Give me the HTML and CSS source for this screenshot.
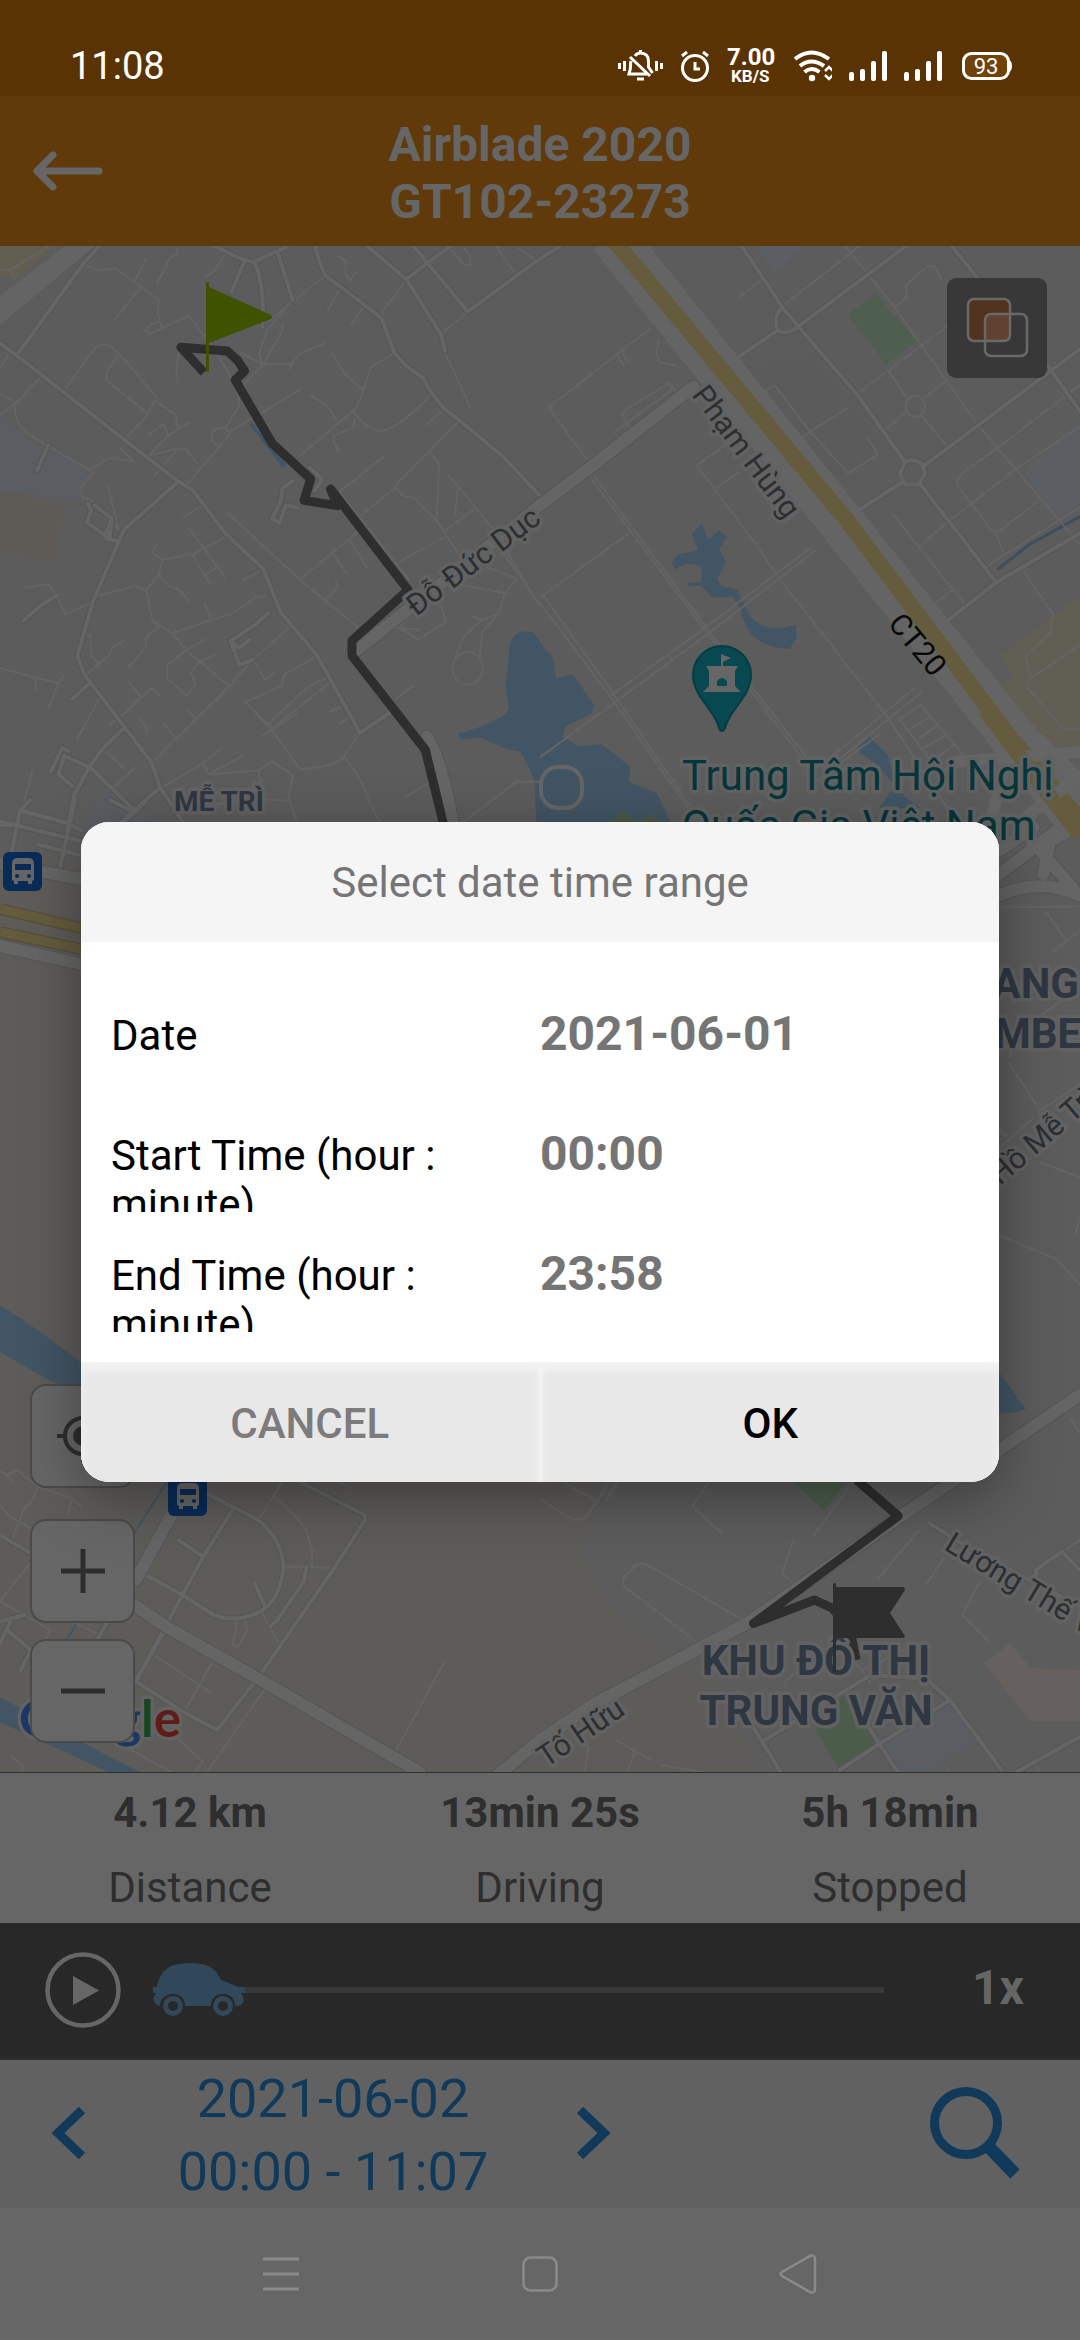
FILE: index.html
```html
<!DOCTYPE html>
<html lang="en">
<head>
<meta charset="utf-8">
<meta name="viewport" content="width=device-width, initial-scale=1">
<title>Trip history</title>
<link rel="stylesheet" href="styles.css">
</head>
<body>
<div class="app">
  <div class="status">
    <span class="clock">11:08</span>
    <div class="status-icons">
      <svg width="45" height="32" viewBox="0 0 45 32" fill="none" stroke="#fff" stroke-width="3"><path d="M1.500 13v6M6.500 11v10M38.500 11v10M43.500 13v6M12 7l20 19M17 6c2-3 4-3 5.500-3 5 0 8 3 8 8v6l4 6M22.500 0v4M13 11c-1 3 0 7-1 9l-1 4h18M19 29h7"/></svg>
      <svg width="30" height="32" viewBox="0 0 30 32" fill="none" stroke="#fff" stroke-width="3"><circle cx="15" cy="18" r="12.500"/><path d="M15 12v7h5M2 6l5-4M28 6l-5-4"/></svg>
      <span class="speed"><b>7.00</b><b class="unit">KB/S</b></span>
      <svg width="38" height="32" viewBox="0 0 38 32" fill="none" stroke="#fff" stroke-width="4"><path d="M1 9q16-13 34 0M6 16q11-9 24 0M10.500 22q7-6 15 0"/><circle cx="18" cy="28" r="3.200" fill="#fff" stroke="none"/><path d="M31 21l4-4 4 4M31 25l4 4 4-4" stroke-width="2.500"/></svg>
      <svg width="38" height="32" viewBox="0 0 38 32" fill="#fff"><rect y="22" width="5" height="9" rx="2"/><rect x="11" y="19" width="5" height="12" rx="2"/><rect x="22" y="11" width="5" height="20" rx="2"/><rect x="33" y="1" width="5" height="30" rx="2"/></svg>
      <svg width="38" height="32" viewBox="0 0 38 32" fill="#fff"><rect y="22" width="5" height="9" rx="2"/><rect x="11" y="19" width="5" height="12" rx="2"/><rect x="22" y="11" width="5" height="20" rx="2"/><rect x="33" y="1" width="5" height="30" rx="2"/></svg>
      <svg width="53" height="32" viewBox="0 0 53 32"><rect x="4.500" y="3.500" width="45" height="25" rx="8" fill="#70430a" stroke="#fff" stroke-width="3"/><path d="M50 10q3 1 3 6t-3 6z" fill="#fff"/><text class="battery" x="27" y="24" text-anchor="middle">93</text></svg>
    </div>
  </div>

  <header class="header">
    <button class="back" aria-label="Back"><svg width="70" height="40" viewBox="0 0 70 40" fill="none" stroke="#666" stroke-width="7" stroke-linecap="round" stroke-linejoin="round"><path d="M66 20H4M20 4L4 20l16 16"/></svg></button>
    <h1>Airblade 2020<br>GT102-23273</h1>
  </header>

  <main class="map">
    <svg class="map-canvas" viewBox="0 246 1080 1526" preserveAspectRatio="xMidYMid slice" role="img" aria-label="Trip map">
      <rect x="0" y="246" width="1080" height="1526" fill="#5c5c5c"/>
      <!-- ground tints -->
      <path fill="#5e5c59" d="M0 850Q300 880 400 1100L600 1500 580 1560 620 1620 720 1690 760 1772H0z"/>
      <g transform="translate(0 240) scale(.34439 .37628)">
        <path fill="#5a5d61" d="M0 470L100 545 250 600 240 690 0 665z"/>
        <path fill="#5e5b57" d="M0 665L185 705 155 865 0 820z"/>
        <path fill="#625e50" d="M0 0H180L40 105 0 95z"/>
        <path fill="#5a5d61" d="M310 1455L560 1600H210z"/>
      </g>
      <g transform="translate(540 240) scale(.34439 .37628)">
        <path fill="#4f5f4f" d="M975 142L1092 270 1005 330 895 198z"/>
        <path fill="#5b5e63" d="M610 0H790L680 88zM1568 480V700L1500 740 1405 615z"/>
        <path fill="#615e53" d="M1568 945L1336 1105 1375 1165 1280 1230 1360 1330 1568 1350z"/>
        <path fill="#595b5e" d="M530 350L790 300 1000 550 900 620 780 640z" opacity=".3"/>
      </g>
      <g transform="translate(540 1300) scale(.34439 .33333)">
        <path fill="#4b5c4b" d="M735 545H890L825 633zM880 1185L978 1332 870 1410 800 1290z"/>
        <path fill="#66605e" d="M1365 1030L1425 1105 1568 1110V1265H1425L1290 1090z"/>
        <path fill="#5a5d62" d="M1190 1200L1285 1310 1120 1418H1040L985 1332z"/>
      </g>
      <!-- water -->
      <g fill="#425564">
        <g transform="translate(0 240) scale(.34439 .37628)">
          <path d="M730 485L835 600 820 605 725 490z"/>
          <path d="M1575 1075L1548 1042Q1490 1030 1480 1080L1468 1190 1478 1245Q1460 1280 1330 1312L1338 1328 1395 1322 1470 1352 1512 1360 1535 1400 1552 1440 1558 1568H1575z"/>
        </g>
        <g transform="translate(540 240) scale(.34439 .37628)">
          <path d="M0 1072L38 1110 46 1165 95 1155 157 1235 150 1260 75 1290 65 1320 110 1345 180 1340 262 1400 258 1440 340 1470 390 1568H0z"/>
          <path d="M440 780L470 756 488 795 520 772 542 788 520 822 540 855 515 900 525 920 572 928 610 1000Q660 1050 742 1022L747 1055 725 1087Q600 1080 585 985L560 948 500 950 468 918 430 920 430 912 468 908 470 870Q430 850 392 876L382 858 400 835 460 825z"/>
          <path d="M925 1345L958 1322 1010 1368 1030 1440 1060 1480 1105 1510H985L1030 1450 980 1395 928 1362z"/>
          <path fill="none" stroke="#3f4e5a" stroke-width="3" d="M1328 876L1420 810 1568 735"/>
        </g>
        <path d="M0 1305Q40 1330 84 1365V1400L0 1352zM0 1697L110 1757 140 1772H108L0 1722z"/>
        <path d="M999 1372L1026 1409 1018 1412 999 1414z"/>
        <path fill="none" stroke="#425564" stroke-width="2" d="M168 1480L135 1532 60 1650"/>
        <path fill="#4c5a46" d="M612 822l10-11 14 11zM640 822l12-8 8 8z"/>
      </g>
      <!-- lanes and alleys -->
      <g class="minor">
        <g transform="translate(0 240) scale(.34439 .37628)">
          <path d="M0 80H30L170 0M30 80L45 105M240 65L290 80 335 75 410 125 462 160 458 190 470 235 548 200 590 250M425 50L390 110M410 125L332 213M515 18V40L495 45 455 118M655 35L620 85 592 100M470 235L435 250 414 235M462 218L435 225 425 245"/>
          <path d="M190 395L265 300Q290 270 320 282L345 300 455 418 430 462 308 372 310 350 345 302M430 462L362 530M455 430L510 465 518 500M430 520L475 488 488 520 550 485M488 520L432 572 515 555 540 558 575 595M515 555L445 630M45 430Q35 480 80 515L260 612 315 580 387 588 345 550M275 612L232 660 240 685 265 692 345 770 312 650M0 410L48 432 120 362M0 465L48 432M0 340L25 305"/>
          <path d="M520 290L512 345 516 382M590 250L635 310 690 395 695 440 655 498 668 515 548 645 520 642M655 498Q600 500 620 540L645 548M665 510L740 470 875 395M700 300L760 330 845 330 875 300 945 274M840 345L850 330M760 330L753 300 775 240 830 180 850 155M765 330L820 240 820 220M695 395L765 330"/>
          <path d="M945 95L760 230M990 125L950 190M1058 175L1018 225M980 42L1005 55 1002 85 1015 110 1038 82M1180 105L1112 190 1108 208M1145 300L1075 340 1055 400 1035 445 870 575M965 302L1000 355 1055 400M900 412L950 440 978 480M1025 455Q1060 500 1105 508 1160 500 1250 412M1030 475L1025 498 970 520 968 535 985 562M1290 450L1235 492M1335 480L1145 655 1170 680 1200 685 1268 745M1250 565L1275 595 1268 745 1335 840 1500 900M1115 575L985 670M1045 735L1145 660M1300 622L1430 765 1568 975M1330 660L1320 735M1290 775L1378 715M1160 855L1290 790M985 670L1190 905M1015 795L1068 875M1040 775L870 902M965 832L1010 890"/>
          <path d="M660 725L870 902 1040 1030M975 905L980 925 940 962M1240 950L1160 1030 1215 1062 1295 1015 1280 970M1140 1030L1220 1035M1350 918L1465 938 1502 900M1465 938L1450 990 1402 1040 1392 1110M1450 992L1400 1010 1350 1050 1320 1110M1400 1010L1370 1000"/>
          <circle cx="1358" cy="1138" r="44"/>
          <path d="M530 740L585 705M548 765L605 835M440 830L472 850 560 835 655 790M458 805L440 830M472 850L460 890 425 930M285 945L390 920 425 930 442 1010 500 1045 612 1010 672 995 740 950 775 945M460 890L490 920 520 930 550 962M560 838L610 915M605 835L655 898M595 890L630 870M592 962L615 1010M703 905L755 880M70 925L140 915 162 940 190 995 270 962M240 1050H262L265 1105 285 1125 315 1105M250 1155L310 1110 330 1080 365 1062M500 1045L540 1090 665 1185 625 1230M540 1090L485 1130 485 1165 543 1212 568 1180 555 1150 580 1120M442 1010L460 1030 425 1055 425 1080 372 1135M540 1090L600 1060M580 1120L630 1102M370 1170L408 1212 355 1265 440 1190 468 1212M920 1105L825 1155 818 1185 712 1228 780 1290 870 1405Q960 1405 998 1375L1045 1310M840 1030L735 1115 665 1185 445 1385M735 1115L770 1170 795 1150M955 1160L890 1190 775 1290M960 1175L780 1305M1150 1220L1198 1185M955 1255L990 1240M983 1285L1015 1270M758 1320L785 1305 865 1255M740 1255L775 1290M0 1138L170 1178 188 1155M170 1178L140 1248M100 1165L105 1180 100 1198M290 1215L222 1330M350 1265L318 1288M470 1280L515 1328M545 1248L572 1275M400 1265L425 1295 428 1310M300 1355L360 1405M470 1455L590 1390 648 1348M590 1390L605 1420 710 1368M605 1420L750 1410 790 1385 850 1422 838 1485 870 1568M750 1410L760 1450M1000 1375Q1060 1440 1070 1490L1110 1560M1175 1482L1250 1440M395 1400L330 1455M620 1500L740 1485 835 1490M95 1405L50 1568M1340 1550L1500 1440H1568"/>
          <path d="M1305 20L1345 65H1365V40L1345 20M1440 15L1500 95M1500 20L1568 60M1280 250L1400 160M1290 295L1368 450M1460 830L1568 970"/>
        </g>
        <g transform="translate(540 240) scale(.34439 .37628)">
          <path d="M320 235L25 445 145 595M345 265L338 300 345 325 400 335M220 300L245 335M235 295L255 325M210 515L380 400 375 380 242 455 240 465 265 508M380 385L392 400M145 630L490 1050 780 1400M155 625L500 1050 795 1400M0 950L265 775M455 600L560 530M455 600L620 800 700 905 1010 1270 1220 1560M510 660L580 615M0 1375L215 1230 490 1045 800 825M200 1215L480 1030 790 815M0 965L210 1220 460 1550M10 945L220 1215 470 1550M320 1150L330 1160M375 1105L385 1120M650 1255L665 1245M665 1275L680 1265M380 1440L395 1430M395 1460L410 1450M235 750L245 740M275 805L285 795M850 1370L1090 1190M870 1380L1110 1200M575 155L645 105M885 15L1030 180 1270 490 1568 810M705 175L930 15M1030 180L1065 150 1062 120 1125 70H1145L1168 110M610 430L680 385 785 510 895 620 980 570 975 560 950 525M785 510L895 445M710 555L785 510M920 410L1240 190M1010 345L1065 420M1070 455L1000 505M1105 465L1180 545M1115 420L1180 375"/>
          <circle cx="1090" cy="442" r="28"/>
          <path d="M1325 555L1240 610Q1200 635 1215 655L1310 770Q1325 780 1340 770L1445 695M1325 555L1568 385M1190 745L1380 610 1568 495M1325 780L1345 830M1300 865L1568 710M1100 815L1190 745M1022 725L1100 815 1235 970M1085 1005L1200 930M1400 875L1490 995 1480 1045 1410 1105 1425 1165 1415 1190 1520 1300H1568M1425 1165L1568 1075M1045 1275L1105 1235 1230 1370 1160 1415 1045 1275M1075 1300L1135 1265M1100 1325L1155 1290M1115 1350L1180 1315M1140 1385L1205 1340M800 1440L990 1310"/>
        </g>
        <g transform="translate(0 1300) scale(.34439 .33333)">
          <path d="M0 615L30 650 90 685M0 510L20 525 50 510 110 560 210 595 240 625M110 560L95 600 70 625 35 720M210 595L195 650M20 525L40 548M90 785L0 905 70 945 145 990 125 1040M400 540L350 545M820 545L750 662M795 590L860 650 888 690 906 750V795M830 800H890L970 805M685 960V1000Q665 1040 690 1040L718 990 710 960M760 935L815 1040M440 1060L615 1180M620 1080L535 1235M1295 1078L1145 1360M980 545L1020 565M30 1368L70 1400 60 1418M280 1000L220 970M380 1350L500 1418M480 1280L530 1330 590 1385 565 1418M770 1165L600 1418"/>
        </g>
        <g transform="translate(540 1300) scale(.34439 .33333)">
          <path d="M0 598L90 655Q115 665 135 650L165 605 50 535M165 605L200 545M225 545L190 605M490 545L443 620 528 700M735 720L703 820 740 855M900 560L795 705M460 1030L245 860Q235 840 250 825L280 795Q300 785 320 800L590 960M1100 690L980 840M1175 770L1120 855M1280 840L1225 945 1305 1028M850 1020L935 1110 960 1150M710 1150Q720 1120 870 1060M715 1165L710 1150M1568 720L1520 755M220 1320L320 1380M275 1360L250 1418M350 1395L480 1418M130 1418L140 1340 90 1300M1060 1050L935 1110M1175 1400L1190 1418M1560 1175Q1520 1230 1568 1260M1440 1400L1450 1418"/>
        </g>
        <g transform="translate(960 780) scale(.33333 .47194)">
          <path d="M117 270L360 268M258 280L320 342M275 365L360 320M145 598L240 700 360 645M150 590L160 560 200 520 360 440M117 780L218 718M117 740L140 755M118 965L290 1015 360 1070M240 810L360 842M235 700L245 720M345 965L360 925M330 1350L360 1385"/>
        </g>
      </g>
      <!-- streets: a dark casing below a lighter fill -->
      <defs>
        <g id="streets">
          <path transform="translate(0 240) scale(.34439 .37628)" d="M290 15L240 65 50 305M0 275L50 308 360 530 518 642 560 665 655 780 765 875 815 990 890 1070 920 1105 955 1160 1045 1310 1150 1245M518 642L360 770 270 960 225 1105 245 1155 362 1295 440 1388 465 1455 540 1560M362 1295L300 1350 260 1400 215 1475 195 1568M260 1400L390 1515 465 1455M390 1515L330 1568M620 15L700 50 735 58 830 20M740 60Q768 120 763 230M710 55L672 138M805 30L850 160M915 15Q930 70 945 95L990 125 1108 208 1145 300 1180 335 1230 368Q1240 395 1290 448L1335 480 1460 575 1568 680M1065 15L1180 105 1280 250 1292 295M1200 15L1358 190 1568 50M1180 105L1240 62 1310 15M140 545L108 612M165 945L120 970 68 1012M258 1180L210 1220M255 700L265 720 252 750 305 785 325 740 275 705M305 785L310 795 340 800M325 740L318 795M780 990L745 1020 670 1065 695 1130 735 1115M670 1065L695 1085 725 1062M200 1358L180 1350 148 1412M185 1375L170 1420 210 1452M185 1370L255 1400M850 640L820 660 815 695 790 740 812 752 830 705 865 712M900 605L935 635 915 665M0 1555H50L60 1515 200 1550"/>
          <path transform="translate(540 240) scale(.34439 .37628)" d="M0 50L60 15M530 340L690 240Q715 255 750 230L1065 15M705 180Q675 200 690 240M585 15L705 180 750 230 920 410 1060 590M1115 600L1568 290M1195 15L1475 335 1568 455M1060 590Q1080 580 1108 592L1118 620 1100 650 1060 650 1045 620 1060 590M1050 645L870 750 890 770 910 740M1105 650L1325 910 1130 1050M1325 910L1568 780"/>
          <path transform="translate(0 800) scale(.33333 .35714)" d="M0 60L45 70 243 115M90 0L60 30 205 65 243 85M60 30L35 145M225 0L175 210M115 125L243 155M330 0L405 35 440 0M405 35L360 70"/>
          <path transform="translate(0 1300) scale(.34439 .33333)" d="M600 580L750 660Q820 720 823 800 815 900 755 935 690 970 620 945L530 885 415 820M675 630L590 770 530 885 485 970 395 1145M518 720L590 770M740 850L768 915M890 800L882 845 805 960 785 980M870 545L1060 645V660L970 805 755 1125 630 1290 540 1240 395 1145M20 990L90 1050 60 1110M0 965L70 945M30 965L0 1030M0 705L90 760M480 990L395 1140M310 970L220 1130"/>
          <path transform="translate(540 1300) scale(.34439 .33333)" d="M645 1325L960 1125 1120 1135 1190 1200 1340 1410M645 1325L610 1265M645 1325L700 1418M985 1332L1190 1200M985 1332L870 1410M985 1332L920 1220M985 1332L1040 1418M1380 1418L1568 1310M1440 830V810L1515 755 1568 810M1130 670L1240 740 1568 920"/>
        </g>
        <g id="avenues">
          <path transform="translate(0 240) scale(.34439 .37628)" d="M1022 1100L1160 1000 1568 705M1240 1320Q1290 1400 1315 1560"/>
          <path transform="translate(540 240) scale(.34439 .37628)" d="M0 705L145 605 445 390"/>
          <path d="M0 946L81 964M0 864L81 879"/>
          <path transform="translate(0 1300) scale(.34439 .33333)" d="M500 640L395 840M390 915L490 985 740 1130 1220 1418M1440 1430L1568 1320"/>
          <path transform="translate(540 1300) scale(.34439 .33333)" d="M0 1320L160 1210 600 970 1060 640 1568 285"/>
          <path transform="translate(960 780) scale(.33333 .47194)" d="M117 200L360 70M117 150L220 100M117 245Q240 205 360 245M215 130L340 230M250 200L270 130 360 95"/>
        </g>
      </defs>
      <use href="#streets" class="street-case"/>
      <use href="#streets" class="street"/>
      <use href="#avenues" class="avenue-case"/>
      <use href="#avenues" class="avenue"/>
      <path d="M0 325L95 246H65L0 296z" fill="#646464"/>
      <rect class="street" x="541" y="767" width="41" height="41" rx="17"/>
      <!-- highway -->
      <path d="M608 240L1080 830" fill="none" stroke="#646464" stroke-width="46" transform="translate(4 -4)"/>
      <path d="M612 238L845 518 1010 737 1080 820" fill="none" stroke="#645c3d" stroke-width="16"/>
      <path d="M955 762L1080 752M1010 740Q1000 790 990 822M1080 775L1020 822M1040 740L1080 780" class="avenue" fill="none"/>
      <path d="M985 710L1045 790 1080 835" fill="none" stroke="#645c3d" stroke-width="15"/>
      <path d="M0 909L81 928M0 932L81 949" stroke="#554f3b" stroke-width="12"/>
      <path d="M0 909L81 928M0 932L81 949" stroke="#645c3d" stroke-width="9"/>

      <!-- recorded route -->
      <g class="route">
        <path transform="translate(0 240) scale(.34439 .37628)" d="M592 352L525 285 660 295 690 320 710 348 683 372 790 540 902 635 883 692 980 706 960 662 1185 930 1022 1065V1105L1235 1355 1295 1580"/>
        <path transform="translate(540 1300) scale(.34439 .33333)" d="M920 540L1040 648 620 970 797 900 850 925 900 990 918 1080"/>
      </g>

      <!-- place and street names -->
      <g class="label road-name">
        <text transform="translate(416 617) rotate(-37)">Đỗ Đức Dục</text>
        <text transform="translate(691 395) rotate(53)">Phạm Hùng</text>
        <text transform="translate(1000 1186) rotate(-41)">Hồ Mễ Trì</text>
        <text transform="translate(943 1549) rotate(31)">Lương Thế Vinh</text>
        <text transform="translate(546 1768) rotate(-34)">Tố Hữu</text>
      </g>
      <text class="route-no" transform="translate(887 624) rotate(50)">CT20</text>
      <g class="label poi">
        <text x="682" y="790">Trung Tâm Hội Nghị</text>
        <text x="682" y="840">Quốc Gia Việt Nam</text>
      </g>
      <g class="label district">
        <text class="small" x="219" y="811" text-anchor="middle">MỄ TRÌ</text>
        <text x="1079" y="998" text-anchor="end">ANG</text>
        <text x="994" y="1048">MBER</text>
        <text x="816" y="1675" text-anchor="middle">KHU ĐÔ THỊ</text>
        <text x="816" y="1725" text-anchor="middle">TRUNG VĂN</text>
      </g>
      <text class="label google" x="19" y="1737"><tspan fill="#1b3766">G</tspan><tspan fill="#5e1b17">o</tspan><tspan fill="#64510f">o</tspan><tspan fill="#1b3766">g</tspan><tspan fill="#174721">l</tspan><tspan fill="#5e1b17">e</tspan></text>

      <!-- markers -->
      <path fill="#3e5200" d="M206 283q2-2 3 0v4l62 28q2 2 0 4l-62 24v29h-3z"/>
      <path fill="#2e2e2e" d="M833 1584q2-2 3 0v3h68l1 3-15 23 15 23-1 2h-68v34h-3z"/>
      <g transform="translate(692 645)">
        <path fill="#084850" stroke="#063d44" stroke-width="2" d="M30 86q-2 0-3-3C24 66 1 52 1 30a29 29 0 0 1 58 0c0 22-23 36-26 53q-1 3-3 3z"/>
        <path fill="#666" d="M29 21V9l10 4-8 4v4h15l-3 5v15l6 6H11l6-6V26l-3-5z"/>
        <path fill="#084850" d="M25 41v-5q5-6 10 0v5z"/>
      </g>
      <g id="bus" transform="translate(3 852)">
        <rect width="39" height="39" rx="6" fill="#092b58"/>
        <path fill="#666" d="M14 6h12q5 0 5 6v16l-2 1v3h-4v-3H15v3h-4v-3l-2-1V12q0-6 5-6z"/>
        <path fill="#092b58" d="M12 12h16v6H12z"/><circle cx="14" cy="24" r="2" fill="#092b58"/><circle cx="26" cy="24" r="2" fill="#092b58"/>
      </g>
      <use href="#bus" x="165" y="625"/>
    </svg>

    <button class="layers" aria-label="Map layers"><svg width="64" height="64" viewBox="0 0 64 64"><rect x="3" y="3" width="42" height="42" rx="5" fill="#52331f"/><path d="M21 18h24v27H21z" fill="#614232"/><g fill="none" stroke="#696969" stroke-width="2.500"><rect x="3" y="3" width="42" height="42" rx="6"/><rect x="20" y="18" width="42" height="42" rx="6"/></g></svg></button>
    <div class="controls">
      <button class="control locate" aria-label="My location"><svg width="54" height="54" viewBox="0 0 54 54" fill="none" stroke="#2e2e2e" stroke-width="4"><circle cx="27" cy="27" r="18"/><circle cx="27" cy="27" r="10" fill="#2e2e2e" stroke="none"/><path d="M1 27h8M45 27h8M27 1v8M27 45v8"/></svg></button>
      <button class="control" aria-label="Zoom in"><svg width="44" height="44" viewBox="0 0 44 44" stroke="#2e2e2e" stroke-width="5"><path d="M0 22h44M22 0v44"/></svg></button>
      <button class="control" aria-label="Zoom out"><svg width="44" height="44" viewBox="0 0 44 44" stroke="#2e2e2e" stroke-width="5"><path d="M0 22h44"/></svg></button>
    </div>
  </main>

  <dl class="stats">
    <div><dd>4.12 km</dd><dt>Distance</dt></div>
    <div><dd>13min 25s</dd><dt>Driving</dt></div>
    <div><dd>5h 18min</dd><dt>Stopped</dt></div>
  </dl>

  <div class="player">
    <button class="play" aria-label="Play"><svg width="76" height="76" viewBox="0 0 76 76"><circle cx="38" cy="38" r="35.500" fill="none" stroke="#666" stroke-width="4.500"/><path d="M28 24l26 14.500L28 53z" fill="#666"/></svg></button>
    <div class="scrub">
      <input type="range" min="0" max="100" value="0" aria-label="Playback position">
      <svg class="car" width="92" height="54" viewBox="0 0 92 54"><path fill="#30485a" d="M7 43C0 42-1 34 3 31 4 16 10 2 27 1Q38-1 48 1C58 2 64 8 68 17L83 23q5 2 5 7 4 5 2 9-1 4-8 4c1-16-25-16-24 0H32c1-16-25-16-25 0z"/><g fill="none" stroke="#30485a" stroke-width="5"><circle cx="20" cy="43" r="7.500"/><circle cx="70" cy="43" r="7.500"/></g></svg>
    </div>
    <button class="rate">1x</button>
  </div>

  <div class="range-bar">
    <button class="step" aria-label="Previous day"><svg width="34" height="54" viewBox="0 0 34 54" fill="none" stroke="#113a5a" stroke-width="9"><path d="M30 4L6 27l24 23"/></svg></button>
    <button class="period">2021-06-02<br>00:00 - 11:07</button>
    <button class="step" aria-label="Next day"><svg width="34" height="54" viewBox="0 0 34 54" fill="none" stroke="#113a5a" stroke-width="9"><path d="M4 4l24 23L4 50"/></svg></button>
    <button class="search" aria-label="Search"><svg width="90" height="92" viewBox="0 0 90 92" fill="none" stroke="#113a5a"><circle cx="36" cy="36" r="31.500" stroke-width="9"/><path d="M57 58l28 29" stroke-width="13"/></svg></button>
  </div>

  <nav class="system-nav">
    <button aria-label="Recent apps"><svg width="36" height="36" viewBox="0 0 36 36" stroke="#8a8a8a" stroke-width="3"><path d="M0 3h36M0 18h36M0 33h36"/></svg></button>
    <button aria-label="Home"><svg width="36" height="36" viewBox="0 0 36 36"><rect x="1.500" y="1.500" width="33" height="33" rx="7" fill="none" stroke="#8a8a8a" stroke-width="2.500"/></svg></button>
    <button aria-label="Back"><svg width="42" height="42" viewBox="0 0 42 42" fill="none" stroke="#8a8a8a" stroke-width="2.500"><path d="M4 19L32 3q5-2 5 3v30q0 5-5 3L4 23q-3-2 0-4z"/></svg></button>
  </nav>

  <div class="overlay">
    <form class="dialog" role="dialog" aria-labelledby="dialog-title">
      <h2 id="dialog-title">Select date time range</h2>
      <div class="fields">
        <div class="field"><label for="date">Date</label><input id="date" type="text" value="2021-06-01" readonly></div>
        <div class="field"><label for="start">Start Time (hour : minute)</label><input id="start" type="text" value="00:00" readonly></div>
        <div class="field"><label for="end">End Time (hour : minute)</label><input id="end" type="text" value="23:58" readonly></div>
      </div>
      <div class="actions">
        <button type="button" class="cancel">CANCEL</button>
        <button type="button" class="ok">OK</button>
      </div>
    </form>
  </div>
</div>
</body>
</html>
```

FILE: styles.css
```css
* { box-sizing: border-box; }

body {
  margin: 0;
  font-family: Roboto, "Noto Sans", sans-serif;
  background: #666;
}

button, input {
  margin: 0;
  padding: 0;
  border: 0;
  background: none;
  color: inherit;
  font: inherit;
}

svg { display: block; }

.app {
  position: relative;
  display: flex;
  flex-direction: column;
  min-height: 100vh;
}

/* status bar */
.status {
  display: flex;
  align-items: center;
  justify-content: space-between;
  height: 96px;
  padding: 36px 68px 0 70px;
  background: #5a3304;
  color: #fff;
}
.clock { font-size: 38px; line-height: 48px; }
.status-icons { display: flex; align-items: center; gap: 17px; }
.speed {
  display: flex;
  flex-direction: column;
  width: 50px;
  font-size: 24px;
  line-height: 21px;
}
.unit { padding-left: 4px; font-size: 17px; line-height: 17px; }
.battery { font-size: 22px; fill: #fff; }

/* title bar */
.header {
  display: grid;
  grid-template-columns: 140px 1fr 140px;
  align-items: center;
  height: 150px;
  background: #603a0a;
  color: #666;
}
.back { padding-left: 33px; }
.header h1 {
  margin: 0;
  padding-top: 3px;
  font-size: 48px;
  line-height: 57px;
  text-align: center;
}

/* map */
.map {
  position: relative;
  flex: 1;
  min-height: 900px;
  border-bottom: 1px solid #2e2e2e;
  overflow: hidden;
}
.map-canvas { position: absolute; inset: 0; width: 100%; height: 100%; }
.map-canvas path, .map-canvas circle { vector-effect: non-scaling-stroke; }
.minor { fill: none; stroke: #646464; stroke-width: 2; stroke-linejoin: round; }
.street-case, .street, .avenue-case, .avenue {
  fill: none;
  stroke-linecap: round;
  stroke-linejoin: round;
}
.street-case { stroke: #565656; stroke-width: 6; }
.street { stroke: #656565; stroke-width: 4; }
.avenue-case { stroke: #555; stroke-width: 14; }
.avenue { stroke: #656565; stroke-width: 12; }
.route { fill: none; stroke: #2e2e2e; stroke-width: 9; stroke-linejoin: round; }
.label { paint-order: stroke; stroke: #626262; stroke-width: 7; stroke-linejoin: round; }
.road-name { fill: #2c2f32; font-size: 30px; }
.route-no { fill: #080808; font-size: 30px; }
.poi { fill: #06353a; font-size: 42px; }
.district { fill: #2f3742; font-size: 42px; font-weight: 700; }
.small { font-size: 28px; }
.google { font-family: Lato, sans-serif; font-size: 51px; font-weight: 700; }

.layers {
  position: absolute;
  top: 32px;
  right: 33px;
  display: grid;
  place-items: center;
  width: 100px;
  height: 100px;
  border-radius: 9px;
  background: #383838;
}
.controls {
  position: absolute;
  bottom: 29px;
  left: 30px;
  display: flex;
  flex-direction: column;
  gap: 16px;
}
.control {
  display: grid;
  place-items: center;
  width: 105px;
  height: 104px;
  border: 2px solid #4a4a4a;
  border-radius: 16px;
  background: #666;
}
.locate { margin-bottom: 15px; }

/* trip totals */
.stats {
  display: grid;
  grid-template-columns: repeat(3, 1fr);
  height: 150px;
  margin: 0;
  padding: 2px 15px 0;
  background: #666;
  color: #2e2e2e;
  font-size: 42px;
  line-height: 75px;
  text-align: center;
}
.stats dd { margin: 0; font-weight: 700; }

/* playback */
.player {
  display: flex;
  align-items: center;
  height: 137px;
  padding: 0 56px 2px 45px;
  border-bottom: 2px solid #303030;
  background: #282828;
  color: #666;
}
.scrub { position: relative; flex: 1; margin: 0 88px 0 32px; }
.scrub input {
  display: block;
  width: 100%;
  height: 54px;
  appearance: none;
}
.scrub input::-webkit-slider-runnable-track { height: 6px; background: #383838; }
.scrub input::-webkit-slider-thumb {
  width: 92px;
  height: 6px;
  appearance: none;
  background: #30485a;
}
.car { position: absolute; top: 0; left: 0; pointer-events: none; }
.rate { padding-bottom: 4px; font-size: 48px; font-weight: 700; }

/* date range bar */
.range-bar {
  display: flex;
  align-items: center;
  height: 148px;
  padding: 0 60px 2px 0;
  background: #616161;
  color: #113a5a;
}
.step { display: grid; place-items: center; width: 138px; height: 100%; }
.period { width: 386px; padding: 3px 0 0 4px; font-size: 54px; line-height: 73px; }
.search { margin-left: auto; }

.system-nav {
  display: grid;
  grid-template-columns: repeat(3, 1fr);
  height: 132px;
  padding: 0 14%;
  background: #666;
}
.system-nav button { display: grid; place-items: center; }

/* dialog */
.overlay {
  position: absolute;
  inset: 96px 0 132px;
  display: flex;
  align-items: center;
  justify-content: center;
}
.dialog {
  width: 85%;
  border-radius: 28px;
  background: #fff;
  box-shadow: 0 16px 60px rgba(0, 0, 0, .35);
  overflow: hidden;
}
.dialog h2 {
  margin: 0;
  padding-top: 2px;
  background: #f5f5f5;
  color: #757575;
  font-size: 42px;
  font-weight: 400;
  line-height: 118px;
  text-align: center;
}
.fields { padding: 30px; }
.field {
  display: grid;
  grid-template-columns: 1fr 1fr;
  align-items: baseline;
  height: 120px;
  padding-top: 32px;
  overflow: hidden;
}
.field label { color: #000; font-size: 42px; line-height: 49px; }
.field input {
  width: 100%;
  color: #757575;
  font-size: 48px;
  font-weight: 700;
  line-height: 60px;
}
.actions { display: grid; grid-template-columns: 1fr 1fr; gap: 3px; background: #f3f3f3; }
.actions button {
  height: 120px;
  padding-top: 2px;
  background: #e8e8e8;
  box-shadow: inset 0 8px 8px #f3f3f3;
  font-size: 42px;
  font-weight: 500;
}
.cancel { color: #7d7b7b; }
.ok { color: #000; }
```
